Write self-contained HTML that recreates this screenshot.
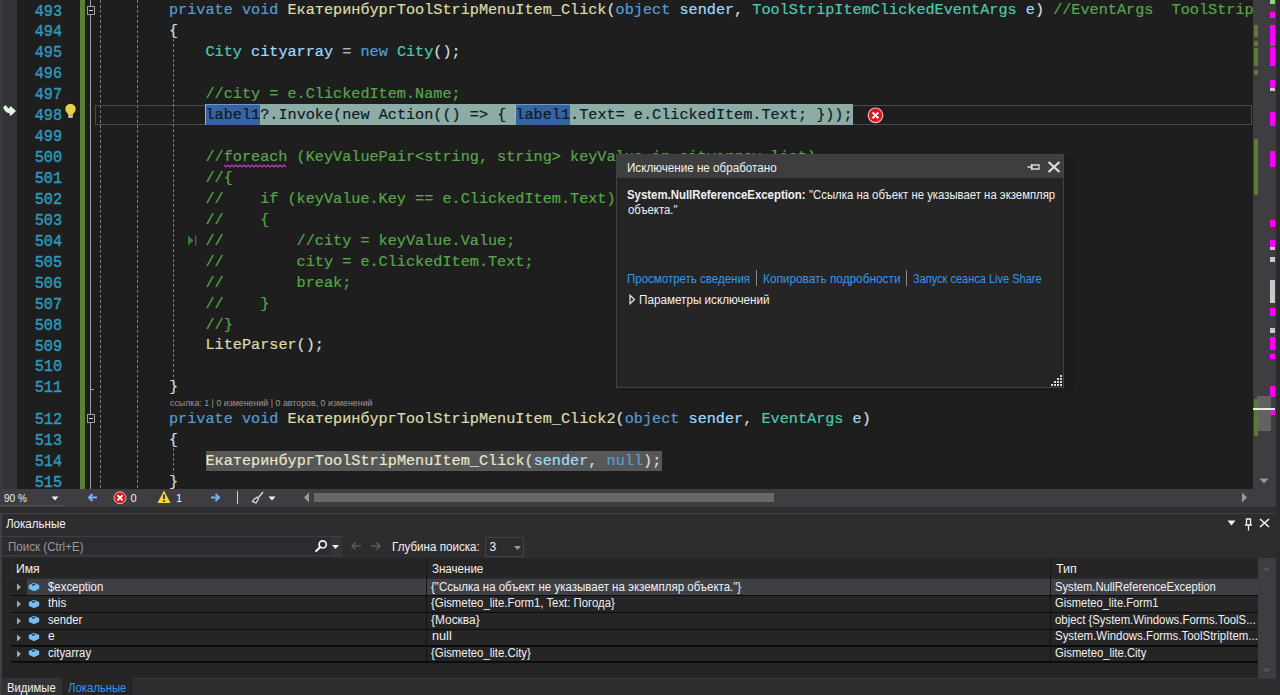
<!DOCTYPE html>
<html><head><meta charset="utf-8"><style>
*{margin:0;padding:0;box-sizing:border-box}
html,body{width:1280px;height:695px;overflow:hidden;background:#2d2d30}
.a{position:absolute}
.code{font-family:"Liberation Mono",monospace;font-size:15.2px;-webkit-text-stroke:0.2px;white-space:pre;line-height:21px;height:21px}
.ln{font-family:"Liberation Mono",monospace;font-size:15.2px;-webkit-text-stroke:0.4px;color:#2e98bb;text-align:right;width:60px;left:2px;line-height:21px;height:21px}
.ui{font-family:"Liberation Sans",sans-serif;white-space:pre;line-height:12px;transform-origin:0 0}
</style></head><body>

<div class="a" style="left:0;top:0;width:1253px;height:489px;background:#1e1e1e;overflow:hidden">
<div class="a" style="left:0;top:0;width:17px;height:489px;background:#333337"></div>
<div class="a" style="left:1px;top:0;width:1px;height:489px;background:#424246"></div>
<div class="a" style="left:80px;top:0;width:5px;height:489px;background:#5b7f39"></div>
<div class="a" style="left:90px;top:0;width:1px;height:489px;background:#a0a0a0"></div>
<div class="a" style="left:100px;top:0;width:1px;height:489px;background:repeating-linear-gradient(#7a7a7a 0 3px,transparent 3px 5px)"></div>
<div class="a" style="left:137px;top:0;width:1px;height:489px;background:repeating-linear-gradient(#7a7a7a 0 3px,transparent 3px 5px)"></div>
<div class="a" style="left:87px;top:6.0px;width:8px;height:9px;background:#1e1e1e;border:1px solid #a0a0a0"></div>
<div class="a" style="left:89px;top:10.0px;width:4px;height:1px;background:#d0d0d0"></div>
<div class="a" style="left:87px;top:414.4px;width:8px;height:9px;background:#1e1e1e;border:1px solid #a0a0a0"></div>
<div class="a" style="left:89px;top:418.4px;width:4px;height:1px;background:#d0d0d0"></div>
<div class="a" style="left:90px;top:388.9px;width:4px;height:1px;background:#a0a0a0"></div>
<div class="a" style="left:95px;top:104.5px;width:1157px;height:20.2px;border:1px solid #4a4a4a"></div>
<div class="a" style="left:173px;top:38.9px;width:1px;height:341.0px;background:repeating-linear-gradient(#7a7a7a 0 3px,transparent 3px 5px)"></div>
<div class="a" style="left:173px;top:447.6px;width:1px;height:26.9px;background:repeating-linear-gradient(#7a7a7a 0 3px,transparent 3px 5px)"></div>
<div class="a ln" style="top:1.50px;transform:scaleY(1.03);transform-origin:0 14px">493</div>
<div class="a code" style="left:169.0px;top:0.40px"><span style="color:#569cd6">private void </span><span style="color:#dcdcaa">ЕкатеринбургToolStripMenuItem_Click</span><span style="color:#dcdcdc">(</span><span style="color:#569cd6">object </span><span style="color:#9cdcfe">sender</span><span style="color:#dcdcdc">, </span><span style="color:#4ec9b0">ToolStripItemClickedEventArgs </span><span style="color:#9cdcfe">e</span><span style="color:#dcdcdc">) </span><span style="color:#57a64a">//EventArgs  ToolStrip</span></div>
<div class="a ln" style="top:22.44px;transform:scaleY(1.03);transform-origin:0 14px">494</div>
<div class="a code" style="left:169.0px;top:21.34px"><span style="color:#dcdcdc">{</span></div>
<div class="a ln" style="top:43.38px;transform:scaleY(1.03);transform-origin:0 14px">495</div>
<div class="a code" style="left:169.0px;top:42.28px"><span style="color:#dcdcdc">    </span><span style="color:#4ec9b0">City </span><span style="color:#9cdcfe">cityarray</span><span style="color:#b4b4b4"> = </span><span style="color:#569cd6">new </span><span style="color:#4ec9b0">City</span><span style="color:#dcdcdc">();</span></div>
<div class="a ln" style="top:64.32px;transform:scaleY(1.03);transform-origin:0 14px">496</div>
<div class="a ln" style="top:85.26px;transform:scaleY(1.03);transform-origin:0 14px">497</div>
<div class="a code" style="left:169.0px;top:84.16px"><span style="color:#57a64a">    //city = e.ClickedItem.Name;</span></div>
<div class="a ln" style="top:106.20px;transform:scaleY(1.03);transform-origin:0 14px">498</div>
<div class="a ln" style="top:127.14px;transform:scaleY(1.03);transform-origin:0 14px">499</div>
<div class="a ln" style="top:148.08px;transform:scaleY(1.03);transform-origin:0 14px">500</div>
<div class="a code" style="left:169.0px;top:146.98px"><span style="color:#57a64a">    //foreach (KeyValuePair&lt;string, string&gt; keyValue in cityarray.list)</span></div>
<div class="a ln" style="top:169.02px;transform:scaleY(1.03);transform-origin:0 14px">501</div>
<div class="a code" style="left:169.0px;top:167.92px"><span style="color:#57a64a">    //{</span></div>
<div class="a ln" style="top:189.96px;transform:scaleY(1.03);transform-origin:0 14px">502</div>
<div class="a code" style="left:169.0px;top:188.86px"><span style="color:#57a64a">    //    if (keyValue.Key == e.ClickedItem.Text)</span></div>
<div class="a ln" style="top:210.90px;transform:scaleY(1.03);transform-origin:0 14px">503</div>
<div class="a code" style="left:169.0px;top:209.80px"><span style="color:#57a64a">    //    {</span></div>
<div class="a ln" style="top:231.84px;transform:scaleY(1.03);transform-origin:0 14px">504</div>
<div class="a code" style="left:169.0px;top:230.74px"><span style="color:#57a64a">    //        //city = keyValue.Value;</span></div>
<div class="a ln" style="top:252.78px;transform:scaleY(1.03);transform-origin:0 14px">505</div>
<div class="a code" style="left:169.0px;top:251.68px"><span style="color:#57a64a">    //        city = e.ClickedItem.Text;</span></div>
<div class="a ln" style="top:273.72px;transform:scaleY(1.03);transform-origin:0 14px">506</div>
<div class="a code" style="left:169.0px;top:272.62px"><span style="color:#57a64a">    //        break;</span></div>
<div class="a ln" style="top:294.66px;transform:scaleY(1.03);transform-origin:0 14px">507</div>
<div class="a code" style="left:169.0px;top:293.56px"><span style="color:#57a64a">    //    }</span></div>
<div class="a ln" style="top:315.60px;transform:scaleY(1.03);transform-origin:0 14px">508</div>
<div class="a code" style="left:169.0px;top:314.50px"><span style="color:#57a64a">    //}</span></div>
<div class="a ln" style="top:336.54px;transform:scaleY(1.03);transform-origin:0 14px">509</div>
<div class="a code" style="left:169.0px;top:335.44px"><span style="color:#dcdcdc">    </span><span style="color:#dcdcaa">LiteParser</span><span style="color:#dcdcdc">();</span></div>
<div class="a ln" style="top:357.48px;transform:scaleY(1.03);transform-origin:0 14px">510</div>
<div class="a ln" style="top:378.42px;transform:scaleY(1.03);transform-origin:0 14px">511</div>
<div class="a code" style="left:169.0px;top:377.32px"><span style="color:#dcdcdc">}</span></div>
<div class="a ln" style="top:410.16px;transform:scaleY(1.03);transform-origin:0 14px">512</div>
<div class="a code" style="left:169.0px;top:409.06px"><span style="color:#569cd6">private void </span><span style="color:#dcdcaa">ЕкатеринбургToolStripMenuItem_Click2</span><span style="color:#dcdcdc">(</span><span style="color:#569cd6">object </span><span style="color:#9cdcfe">sender</span><span style="color:#dcdcdc">, </span><span style="color:#4ec9b0">EventArgs </span><span style="color:#9cdcfe">e</span><span style="color:#dcdcdc">)</span></div>
<div class="a ln" style="top:431.10px;transform:scaleY(1.03);transform-origin:0 14px">513</div>
<div class="a code" style="left:169.0px;top:430.00px"><span style="color:#dcdcdc">{</span></div>
<div class="a ln" style="top:452.04px;transform:scaleY(1.03);transform-origin:0 14px">514</div>
<div class="a ln" style="top:472.98px;transform:scaleY(1.03);transform-origin:0 14px">515</div>
<div class="a code" style="left:169.0px;top:471.88px"><span style="color:#dcdcdc">}</span></div>
<svg class="a" style="left:223.7px;top:163.6px" width="64" height="4" viewBox="0 0 64 4"><path d="M0 1 L2 3 L4 1 L6 3 L8 1 L10 3 L12 1 L14 3 L16 1 L18 3 L20 1 L22 3 L24 1 L26 3 L28 1 L30 3 L32 1 L34 3 L36 1 L38 3 L40 1 L42 3 L44 1 L46 3 L48 1 L50 3 L52 1 L54 3 L56 1 L58 3 L60 1 L62 3" stroke="#c040c0" stroke-width="1.2" fill="none"/></svg>
<div class="a" style="left:205.00px;top:104px;width:648.30px;height:21px;background:#8eaca6"></div>
<div class="a" style="left:205.00px;top:104px;width:55.24px;height:21px;background:#3764a0;border-top:1px solid #6f97c8;border-left:1px solid #8fb0d8"></div>
<div class="a" style="left:515.21px;top:104px;width:55.24px;height:21px;background:#3764a0;border-top:1px solid #6f97c8;border-left:1px solid #8fb0d8"></div>
<div class="a code" style="left:205.50px;top:105.10px;color:#0e1a26">label1?.Invoke(new Action(() =&gt; { label1.Text= e.ClickedItem.Text; }));</div>
<div class="a" style="left:205.50px;top:450.8px;width:456.20px;height:20px;background:#575757"></div>
<div class="a code" style="left:205.50px;top:450.94px"><span style="color:#e6e6c8">ЕкатеринбургToolStripMenuItem_Click</span><span style="color:#dcdcdc">(</span><span style="color:#9cdcfe">sender</span><span style="color:#dcdcdc">, </span><span style="color:#569cd6">null</span><span style="color:#dcdcdc">);</span></div>
<svg class="a" style="left:867px;top:106.5px" width="17" height="17" viewBox="0 0 17 17"><circle cx="8.5" cy="8.3" r="7.3" fill="#d41c1c" stroke="#f0b8b8" stroke-width="1.2"/><path d="M5.6 5.4l5.8 5.8M11.4 5.4l-5.8 5.8" stroke="#fff" stroke-width="2"/></svg>
<svg class="a" style="left:64px;top:103px" width="13" height="16" viewBox="0 0 13 16"><circle cx="6.5" cy="6" r="5.2" fill="#e7d04a"/><path d="M4 9h5v3.5H4z" fill="#e7d04a"/><rect x="4.3" y="12.5" width="4.4" height="2.2" fill="#d8d8d8"/></svg>
<svg class="a" style="left:3px;top:105px" width="13" height="11" viewBox="0 0 13 11"><path d="M1 2.5C2.5 6.5 5 7.5 7.5 7.5V10l4.5-4L7.5 2v2.5C5.5 4.5 4 4 2.5 1z" fill="#e4f4e0" stroke="#e4f4e0" stroke-width="1.6" stroke-linejoin="round"/></svg>
<svg class="a" style="left:187px;top:235.3px" width="10" height="11" viewBox="0 0 10 11"><path d="M1 0.5v10l5.5-5z" fill="#3a7a3a"/><rect x="8" y="0.5" width="1.3" height="10" fill="#4f6a4f"/></svg>
<div class="a ui" style="left:169.50px;top:396.88px;font-size:9px;color:#999999;transform:scaleX(0.9824)">ссылка: 1 | 0 изменений | 0 авторов, 0 изменений</div>
</div>
<div class="a" style="left:1253px;top:0;width:23px;height:489px;background:#3e3e42"></div>
<div class="a" style="left:1254px;top:25px;width:4px;height:12px;background:#5d7a32"></div>
<div class="a" style="left:1254px;top:41px;width:4px;height:5px;background:#5d7a32"></div>
<div class="a" style="left:1254px;top:48px;width:4px;height:18px;background:#5d7a32"></div>
<div class="a" style="left:1254px;top:70px;width:4px;height:5px;background:#5d7a32"></div>
<div class="a" style="left:1254px;top:139px;width:4px;height:56px;background:#5d7a32"></div>
<div class="a" style="left:1254px;top:399px;width:4px;height:37px;background:#5d7a32"></div>
<div class="a" style="left:1270px;top:0;width:5px;height:4px;background:#8fd48f"></div>
<div class="a" style="left:1270px;top:12px;width:5px;height:6px;background:#ff00ff"></div>
<div class="a" style="left:1270px;top:25px;width:5px;height:21px;background:#ff00ff"></div>
<div class="a" style="left:1270px;top:47px;width:5px;height:19px;background:#ff00ff"></div>
<div class="a" style="left:1270px;top:80px;width:5px;height:8px;background:#ff00ff"></div>
<div class="a" style="left:1270px;top:112px;width:5px;height:14px;background:#ff00ff"></div>
<div class="a" style="left:1270px;top:151px;width:5px;height:16px;background:#ff00ff"></div>
<div class="a" style="left:1270px;top:220px;width:5px;height:7px;background:#ff00ff"></div>
<div class="a" style="left:1270px;top:240px;width:5px;height:7px;background:#ff00ff"></div>
<div class="a" style="left:1270px;top:308px;width:5px;height:8px;background:#ff00ff"></div>
<div class="a" style="left:1270px;top:337px;width:5px;height:13px;background:#ff00ff"></div>
<div class="a" style="left:1270px;top:354px;width:5px;height:5px;background:#ff00ff"></div>
<div class="a" style="left:1270px;top:386px;width:5px;height:11px;background:#ff00ff"></div>
<div class="a" style="left:1270px;top:410px;width:5px;height:5px;background:#ff00ff"></div>
<div class="a" style="left:1270px;top:88px;width:5px;height:3px;background:#c8c8c8"></div>
<div class="a" style="left:1270px;top:247px;width:5px;height:3px;background:#c8c8c8"></div>
<div class="a" style="left:1270px;top:257px;width:5px;height:5px;background:#c8c8c8"></div>
<div class="a" style="left:1270px;top:280px;width:5px;height:23px;background:#c8c8c8"></div>
<div class="a" style="left:1270px;top:328px;width:5px;height:5px;background:#c8c8c8"></div>
<div class="a" style="left:1257px;top:396px;width:14px;height:35px;background:#686868;opacity:.85"></div>
<div class="a" style="left:1253px;top:408px;width:22px;height:2px;background:#e8e8e8"></div>
<svg class="a" style="left:1259px;top:478px" width="10" height="6" viewBox="0 0 10 6"><path d="M0.5 0.5h9l-4.5 5z" fill="#999"/></svg>
<div class="a" style="left:1276px;top:0;width:4px;height:695px;background:#2b2b2e"></div>
<div class="a" style="left:1064px;top:157px;width:10px;height:234px;background:#1b1b1b"></div>
<div class="a" style="left:619px;top:388px;width:450px;height:3px;background:#1b1b1b"></div>
<div class="a" style="left:616px;top:154px;width:448px;height:234px;background:#252526;border:1px solid #434346"></div>
<div class="a" style="left:617px;top:155px;width:446px;height:23px;background:#3e3e40"></div>
<svg class="a" style="left:1027px;top:161px" width="14" height="12" viewBox="0 0 14 12"><path d="M0.5 6h4M4.5 3v6M5 4h7v4H5z" stroke="#d8d8d8" stroke-width="1.3" fill="none"/></svg>
<svg class="a" style="left:1047px;top:161px" width="14" height="12" viewBox="0 0 14 12"><path d="M1.5 1l11 10M12.5 1l-11 10" stroke="#dcdcdc" stroke-width="2.3"/></svg>
<div class="a" style="left:756px;top:270px;width:1px;height:16px;background:#8a8a8a"></div>
<div class="a" style="left:906px;top:270px;width:1px;height:16px;background:#8a8a8a"></div>
<svg class="a" style="left:629px;top:294px" width="7" height="11" viewBox="0 0 7 11"><path d="M1 1.2v8.6l4.5-4.3z" stroke="#e8e8e8" stroke-width="1.2" fill="none"/></svg>
<svg class="a" style="left:1051px;top:375px" width="11" height="11" viewBox="0 0 11 11" fill="#d8d8d8"><rect x="9" y="0" width="2" height="2"/><rect x="9" y="3" width="2" height="2"/><rect x="6" y="3" width="2" height="2"/><rect x="9" y="6" width="2" height="2"/><rect x="6" y="6" width="2" height="2"/><rect x="3" y="6" width="2" height="2"/><rect x="9" y="9" width="2" height="2"/><rect x="6" y="9" width="2" height="2"/><rect x="3" y="9" width="2" height="2"/><rect x="0" y="9" width="2" height="2"/></svg>
<div class="a ui" style="left:626.60px;top:161.84px;font-size:12px;color:#f1f1f1;transform:scaleX(0.9710)">Исключение не обработано</div>
<div class="a ui" style="left:627.20px;top:188.59px;font-size:12px;font-weight:bold;color:#f1f1f1;transform:scaleX(0.9494)">System.NullReferenceException:</div>
<div class="a ui" style="left:808.60px;top:188.59px;font-size:12px;color:#f1f1f1;transform:scaleX(0.9462)">"Ссылка на объект не указывает на экземпляр</div>
<div class="a ui" style="left:627.50px;top:203.64px;font-size:12px;color:#f1f1f1;transform:scaleX(0.9448)">объекта."</div>
<div class="a ui" style="left:627.40px;top:272.64px;font-size:12px;color:#3a96e8;transform:scaleX(0.9592)">Просмотреть сведения</div>
<div class="a ui" style="left:763.30px;top:272.64px;font-size:12px;color:#3a96e8;transform:scaleX(0.9851)">Копировать подробности</div>
<div class="a ui" style="left:913.40px;top:272.64px;font-size:12px;color:#3a96e8;transform:scaleX(0.9171)">Запуск сеанса Live Share</div>
<div class="a ui" style="left:639.10px;top:294.04px;font-size:12px;color:#f1f1f1;transform:scaleX(0.9739)">Параметры исключений</div>
<div class="a" style="left:0;top:489px;width:1276px;height:17.6px;background:#3e3e42"></div>
<div class="a" style="left:0;top:505px;width:63px;height:1px;background:#525256"></div>
<svg class="a" style="left:51px;top:496px" width="8" height="5" viewBox="0 0 8 5"><path d="M0.5 0.5h7l-3.5 4z" fill="#f1f1f1"/></svg>
<svg class="a" style="left:87px;top:493px" width="11" height="9" viewBox="0 0 11 9"><path d="M10 4.5H2.5M5.5 1L2 4.5 5.5 8" stroke="#75b0ef" stroke-width="2" fill="none"/></svg>
<svg class="a" style="left:113px;top:491px" width="14" height="14" viewBox="0 0 14 14"><circle cx="7" cy="6.8" r="6" fill="#d41c1c" stroke="#f0b0b0" stroke-width="1"/><path d="M4.4 4.2l5.2 5.2M9.6 4.2l-5.2 5.2" stroke="#fff" stroke-width="1.8"/></svg>
<svg class="a" style="left:157px;top:490px" width="14" height="14" viewBox="0 0 14 14"><path d="M7 0.5L13.5 13H0.5z" fill="#f5d33a"/><path d="M7 4.5v4.5M7 10.2v1.7" stroke="#1e1e1e" stroke-width="1.6"/></svg>
<svg class="a" style="left:210px;top:493px" width="11" height="9" viewBox="0 0 11 9"><path d="M1 4.5h7.5M5.5 1L9 4.5 5.5 8" stroke="#75b0ef" stroke-width="2" fill="none"/></svg>
<div class="a" style="left:237px;top:491px;width:1px;height:13px;background:#d0d0d0"></div>
<svg class="a" style="left:251px;top:491px" width="13" height="13" viewBox="0 0 13 13"><path d="M12 1L7.5 6.5M3 8.5l3-2.5 1.5 1.8L5 12 1.5 10.5z" stroke="#e0e0e0" stroke-width="1.2" fill="none"/></svg>
<svg class="a" style="left:268px;top:496px" width="8" height="5" viewBox="0 0 8 5"><path d="M0.5 0.5h7l-3.5 4z" fill="#f1f1f1"/></svg>
<svg class="a" style="left:303px;top:492px" width="7" height="11" viewBox="0 0 7 11"><path d="M6 0.5v10L1 5.5z" fill="#999"/></svg>
<div class="a" style="left:314px;top:493px;width:460px;height:9px;background:#686868"></div>
<svg class="a" style="left:1241px;top:492px" width="7" height="11" viewBox="0 0 7 11"><path d="M1 0.5v10L6 5.5z" fill="#999"/></svg>
<div class="a ui" style="left:4.00px;top:492.19px;font-size:11px;color:#f1f1f1;transform:scaleX(0.9094)">90 %</div>
<div class="a ui" style="left:130.50px;top:492.19px;font-size:11px;color:#f1f1f1;transform:scaleX(1.0000)">0</div>
<div class="a ui" style="left:176.00px;top:492.19px;font-size:11px;color:#f1f1f1;transform:scaleX(1.0000)">1</div>
<div class="a" style="left:0;top:506.6px;width:1276px;height:6.4px;background:#2d2d30"></div>
<div class="a" style="left:0;top:513px;width:1276px;height:182px;background:#2d2d30;border-top:1px solid #3f3f46;border-left:2px solid #3f3f46"></div>
<div class="a" style="left:72px;top:520px;width:1150px;height:8px;background-image:radial-gradient(#353539 0.7px,transparent 0.9px);background-size:3px 3px"></div>
<svg class="a" style="left:1227px;top:520px" width="9" height="6" viewBox="0 0 9 6"><path d="M0.5 0.5h8l-4 5z" fill="#f1f1f1"/></svg>
<svg class="a" style="left:1244px;top:518px" width="9" height="13" viewBox="0 0 9 13"><path d="M2.5 1h4v6h-4zM1 7h7M4.5 7v5.5" stroke="#f1f1f1" stroke-width="1.3" fill="none"/></svg>
<svg class="a" style="left:1259px;top:518px" width="11" height="10" viewBox="0 0 11 10"><path d="M1 1l9 8M10 1l-9 8" stroke="#f1f1f1" stroke-width="1.6"/></svg>
<div class="a" style="left:2px;top:536px;width:340px;height:20px;background:#2c2c30;border-top:1px solid #3f3f46;border-bottom:1px solid #3f3f46"></div>
<div class="a" style="left:330px;top:537px;width:12px;height:18px;background:#333338"></div>
<svg class="a" style="left:314px;top:539px" width="14" height="14" viewBox="0 0 14 14"><circle cx="8.7" cy="5.4" r="3.6" stroke="#f1f1f1" stroke-width="1.7" fill="none"/><path d="M6.2 8l-4 4" stroke="#f1f1f1" stroke-width="2.2" stroke-linecap="round"/></svg>
<svg class="a" style="left:332px;top:545px" width="7" height="4" viewBox="0 0 7 4"><path d="M0 0h7l-3.5 4z" fill="#f1f1f1"/></svg>
<svg class="a" style="left:350px;top:541px" width="12" height="10" viewBox="0 0 12 10"><path d="M11 5H2M5.5 1.5L2 5l3.5 3.5" stroke="#5a5a5e" stroke-width="1.6" fill="none"/></svg>
<svg class="a" style="left:370px;top:541px" width="12" height="10" viewBox="0 0 12 10"><path d="M1 5H10M6.5 1.5L10 5 6.5 8.5" stroke="#5a5a5e" stroke-width="1.6" fill="none"/></svg>
<div class="a" style="left:485px;top:537px;width:39px;height:19.5px;background:#2d2d30;border:1px solid #434346"></div>
<svg class="a" style="left:514px;top:546px" width="7" height="4" viewBox="0 0 7 4"><path d="M0 0h7l-3.5 4z" fill="#999"/></svg>
<div class="a" style="left:2px;top:558px;width:1256px;height:120px;background:#252526"></div>
<div class="a" style="left:2px;top:577px;width:1256px;height:2px;background:#2a2a2c"></div>
<div class="a" style="left:11px;top:558px;width:1px;height:20px;background:#2d2d30"></div>
<div class="a" style="left:426px;top:558px;width:1px;height:104px;background:#141414"></div>
<div class="a" style="left:1050px;top:558px;width:1px;height:104px;background:#141414"></div>
<div class="a" style="left:27px;top:579px;width:1231px;height:15.7px;background:#3f3f46"></div>
<div class="a" style="left:426px;top:579px;width:1px;height:16px;background:#141414"></div>
<div class="a" style="left:1050px;top:579px;width:1px;height:16px;background:#141414"></div>
<div class="a" style="left:11px;top:594.7px;width:1247px;height:1.5px;background:#0c0c0c"></div>
<svg class="a" style="left:15.5px;top:583.1px" width="6" height="8" viewBox="0 0 6 8"><path d="M1 0.5l4 3.5-4 3.5z" fill="#a8a8a8"/></svg>
<svg class="a" style="left:28px;top:581.6px" width="12" height="10" viewBox="0 0 12 10"><path d="M0.8 3L6 0.8 11.2 3v3.8L6 9.2 0.8 6.8z" fill="#78bdf0"/><path d="M4 3.3l3.2-1.2" stroke="#16324a" stroke-width="1.4"/></svg>
<div class="a" style="left:11px;top:611.9px;width:1247px;height:1.5px;background:#0c0c0c"></div>
<svg class="a" style="left:15.5px;top:600.3px" width="6" height="8" viewBox="0 0 6 8"><path d="M1 0.5l4 3.5-4 3.5z" fill="#a8a8a8"/></svg>
<svg class="a" style="left:28px;top:598.8px" width="12" height="10" viewBox="0 0 12 10"><path d="M0.8 3L6 0.8 11.2 3v3.8L6 9.2 0.8 6.8z" fill="#78bdf0"/><path d="M4 3.3l3.2-1.2" stroke="#16324a" stroke-width="1.4"/></svg>
<div class="a" style="left:11px;top:628.5px;width:1247px;height:1.5px;background:#0c0c0c"></div>
<svg class="a" style="left:15.5px;top:616.9px" width="6" height="8" viewBox="0 0 6 8"><path d="M1 0.5l4 3.5-4 3.5z" fill="#a8a8a8"/></svg>
<svg class="a" style="left:28px;top:615.4px" width="12" height="10" viewBox="0 0 12 10"><path d="M0.8 3L6 0.8 11.2 3v3.8L6 9.2 0.8 6.8z" fill="#78bdf0"/><path d="M4 3.3l3.2-1.2" stroke="#16324a" stroke-width="1.4"/></svg>
<div class="a" style="left:11px;top:645.1px;width:1247px;height:1.5px;background:#0c0c0c"></div>
<svg class="a" style="left:15.5px;top:633.5px" width="6" height="8" viewBox="0 0 6 8"><path d="M1 0.5l4 3.5-4 3.5z" fill="#a8a8a8"/></svg>
<svg class="a" style="left:28px;top:632.0px" width="12" height="10" viewBox="0 0 12 10"><path d="M0.8 3L6 0.8 11.2 3v3.8L6 9.2 0.8 6.8z" fill="#78bdf0"/><path d="M4 3.3l3.2-1.2" stroke="#16324a" stroke-width="1.4"/></svg>
<div class="a" style="left:11px;top:661.3px;width:1247px;height:1.5px;background:#0c0c0c"></div>
<svg class="a" style="left:15.5px;top:649.7px" width="6" height="8" viewBox="0 0 6 8"><path d="M1 0.5l4 3.5-4 3.5z" fill="#a8a8a8"/></svg>
<svg class="a" style="left:28px;top:648.2px" width="12" height="10" viewBox="0 0 12 10"><path d="M0.8 3L6 0.8 11.2 3v3.8L6 9.2 0.8 6.8z" fill="#78bdf0"/><path d="M4 3.3l3.2-1.2" stroke="#16324a" stroke-width="1.4"/></svg>
<div class="a" style="left:1258px;top:558px;width:18px;height:120px;background:#3e3e42"></div>
<svg class="a" style="left:1262px;top:566px" width="9" height="5" viewBox="0 0 9 5"><path d="M0.5 4.5h8l-4-4z" fill="#555558"/></svg>
<svg class="a" style="left:1262px;top:668px" width="9" height="5" viewBox="0 0 9 5"><path d="M0.5 0.5h8l-4 4z" fill="#555558"/></svg>
<div class="a" style="left:2px;top:678px;width:1274px;height:17px;background:#2d2d30;border-top:1px solid #38383c"></div>
<div class="a" style="left:2px;top:678px;width:60px;height:17px;background:#333337"></div>
<div class="a" style="left:62px;top:678px;width:71px;height:17px;background:#252526"></div>
<div class="a ui" style="left:6.00px;top:517.64px;font-size:12px;color:#f1f1f1;transform:scaleX(0.9640)">Локальные</div>
<div class="a ui" style="left:7.50px;top:540.64px;font-size:12px;color:#9a9a9a;transform:scaleX(0.9648)">Поиск (Ctrl+E)</div>
<div class="a ui" style="left:391.50px;top:541.44px;font-size:12px;color:#f1f1f1;transform:scaleX(0.9697)">Глубина поиска:</div>
<div class="a ui" style="left:489.60px;top:541.44px;font-size:12px;color:#f1f1f1;transform:scaleX(1.0000)">3</div>
<div class="a ui" style="left:15.50px;top:562.84px;font-size:12px;color:#f1f1f1;transform:scaleX(1.0142)">Имя</div>
<div class="a ui" style="left:431.90px;top:562.64px;font-size:12px;color:#f1f1f1;transform:scaleX(0.9637)">Значение</div>
<div class="a ui" style="left:1055.90px;top:562.84px;font-size:12px;color:#f1f1f1;transform:scaleX(1.0433)">Тип</div>
<div class="a ui" style="left:47.80px;top:580.54px;font-size:12px;color:#f1f1f1;transform:scaleX(0.9517)">$exception</div>
<div class="a ui" style="left:47.50px;top:597.19px;font-size:12px;color:#f1f1f1;transform:scaleX(0.9853)">this</div>
<div class="a ui" style="left:47.80px;top:613.84px;font-size:12px;color:#f1f1f1;transform:scaleX(0.9320)">sender</div>
<div class="a ui" style="left:48.00px;top:630.49px;font-size:12px;color:#f1f1f1;transform:scaleX(1.0000)">e</div>
<div class="a ui" style="left:48.00px;top:647.14px;font-size:12px;color:#f1f1f1;transform:scaleX(0.9506)">cityarray</div>
<div class="a ui" style="left:431.20px;top:580.54px;font-size:12px;color:#f1f1f1;transform:scaleX(0.9578)">{"Ссылка на объект не указывает на экземпляр объекта."}</div>
<div class="a ui" style="left:431.20px;top:597.19px;font-size:12px;color:#f1f1f1;transform:scaleX(0.9474)">{Gismeteo_lite.Form1, Text: Погода}</div>
<div class="a ui" style="left:431.20px;top:613.84px;font-size:12px;color:#f1f1f1;transform:scaleX(0.9923)">{Москва}</div>
<div class="a ui" style="left:431.50px;top:630.49px;font-size:12px;color:#f1f1f1;transform:scaleX(1.0548)">null</div>
<div class="a ui" style="left:431.20px;top:647.14px;font-size:12px;color:#f1f1f1;transform:scaleX(0.9471)">{Gismeteo_lite.City}</div>
<div class="a ui" style="left:1055.30px;top:580.54px;font-size:12px;color:#f1f1f1;transform:scaleX(0.9340)">System.NullReferenceException</div>
<div class="a ui" style="left:1055.30px;top:597.19px;font-size:12px;color:#f1f1f1;transform:scaleX(0.9284)">Gismeteo_lite.Form1</div>
<div class="a ui" style="left:1055.30px;top:613.84px;font-size:12px;color:#f1f1f1;transform:scaleX(0.9460)">object {System.Windows.Forms.ToolS...</div>
<div class="a ui" style="left:1055.30px;top:630.49px;font-size:12px;color:#f1f1f1;transform:scaleX(0.9535)">System.Windows.Forms.ToolStripItem...</div>
<div class="a ui" style="left:1055.30px;top:647.14px;font-size:12px;color:#f1f1f1;transform:scaleX(0.9377)">Gismeteo_lite.City</div>
<div class="a ui" style="left:7.00px;top:681.84px;font-size:12px;color:#f1f1f1;transform:scaleX(0.9371)">Видимые</div>
<div class="a ui" style="left:68.40px;top:681.84px;font-size:12px;color:#3a96e8;transform:scaleX(0.9415)">Локальные</div>
</body></html>
